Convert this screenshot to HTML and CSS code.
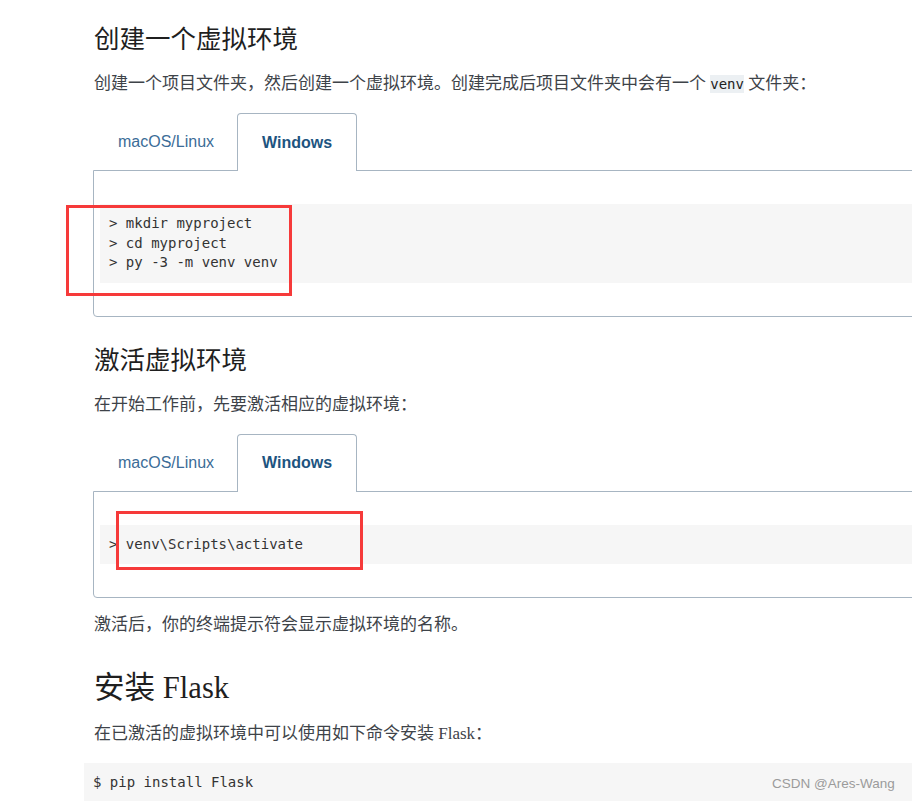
FILE: index.html
```html
<!DOCTYPE html>
<html lang="zh-CN">
<head>
<meta charset="utf-8">
<title>Flask 安装</title>
<link rel="stylesheet" href="styles.css">
</head>
<body>
<div class="page">
  <h3>创建一个虚拟环境</h3>
  <p>创建一个项目文件夹，然后创建一个虚拟环境。创建完成后项目文件夹中会有一个 <code>venv</code> 文件夹：</p>
  <div class="tabs">
    <div class="tablist"><span class="tab">macOS/Linux</span><span class="tab active">Windows</span></div>
    <div class="panel"><pre class="code">&gt; mkdir myproject
&gt; cd myproject
&gt; py -3 -m venv venv</pre></div>
  </div>

  <h3>激活虚拟环境</h3>
  <p>在开始工作前，先要激活相应的虚拟环境：</p>
  <div class="tabs">
    <div class="tablist"><span class="tab">macOS/Linux</span><span class="tab active">Windows</span></div>
    <div class="panel"><pre class="code">&gt; venv\Scripts\activate</pre></div>
  </div>
  <p class="after">激活后，你的终端提示符会显示虚拟环境的名称。</p>

  <h2>安装 Flask</h2>
  <p>在已激活的虚拟环境中可以使用如下命令安装 Flask：</p>
  <pre class="code block">$ pip install Flask</pre>

  <div class="mark mark-one"></div>
  <div class="mark mark-two"></div>
  <div class="watermark">CSDN @Ares-Wang</div>
</div>
</body>
</html>
```

FILE: styles.css
```css
html, body {
  margin: 0;
  padding: 0;
  background: #ffffff;
}

body {
  overflow: hidden;
  font-family: "Liberation Serif", "Noto Sans CJK SC", serif;
  font-size: 17px;
  color: #3e4349;
}

.page {
  position: relative;
  padding: 25px 0 0 94px;
  width: 840px;
  height: 776px;
}

h3 {
  font-size: 25.5px;
  font-weight: normal;
  line-height: 30px;
  margin: 0 0 17px;
  color: #1f1f1f;
}

h2 {
  font-size: 30.6px;
  font-weight: normal;
  line-height: 36px;
  margin: 33px 0 16px;
  color: #1f1f1f;
}

p {
  margin: 0 0 17px;
  line-height: 24px;
}

code {
  font-family: "DejaVu Sans Mono", monospace;
  font-size: 14px;
  background: #ecf0f3;
  color: #222222;
  padding: 1px 0;
}

.tabs {
  margin: 0 0 29px -1px;
}

.tabs + p.after {
  margin-top: -14px;
}

.tablist {
  display: flex;
  height: 57px;
}

.tab {
  display: flex;
  align-items: center;
  padding: 0 24px;
  border: 1px solid transparent;
  border-bottom: 0;
  border-radius: 4px 4px 0 0;
  font-family: "Liberation Sans", Arial, sans-serif;
  font-size: 16px;
  color: #3b6c97;
}

.tab:first-child {
  padding-right: 22px;
}

.tab.active {
  position: relative;
  z-index: 1;
  height: 57px;
  margin-bottom: -1px;
  border-color: #a7b5c2;
  background: #ffffff;
  font-weight: bold;
  color: #1d5480;
}

.panel {
  border: 1px solid #a7b5c2;
  border-radius: 0 0 4px 4px;
  padding: 33px 0 33px 6px;
}

pre.code {
  margin: 0;
  background: #f6f6f6;
  padding: 10px 9px 10px;
  font-family: "DejaVu Sans Mono", monospace;
  font-size: 14px;
  line-height: 19.5px;
  color: #333333;
}

pre.code.block {
  margin: 16px 0 0 -10px;
  padding-left: 9px;
  height: 40px;
}

.mark {
  position: absolute;
  border: 3px solid #f63a3a;
  box-sizing: border-box;
}

.mark-one {
  left: 66px;
  top: 205px;
  width: 226px;
  height: 91px;
}

.mark-two {
  left: 116px;
  top: 511px;
  width: 247px;
  height: 59px;
}

.watermark {
  position: absolute;
  left: 772px;
  top: 776px;
  font-family: "Liberation Sans", Arial, sans-serif;
  font-size: 13.5px;
  line-height: 16px;
  color: #9b9b9b;
}
```
